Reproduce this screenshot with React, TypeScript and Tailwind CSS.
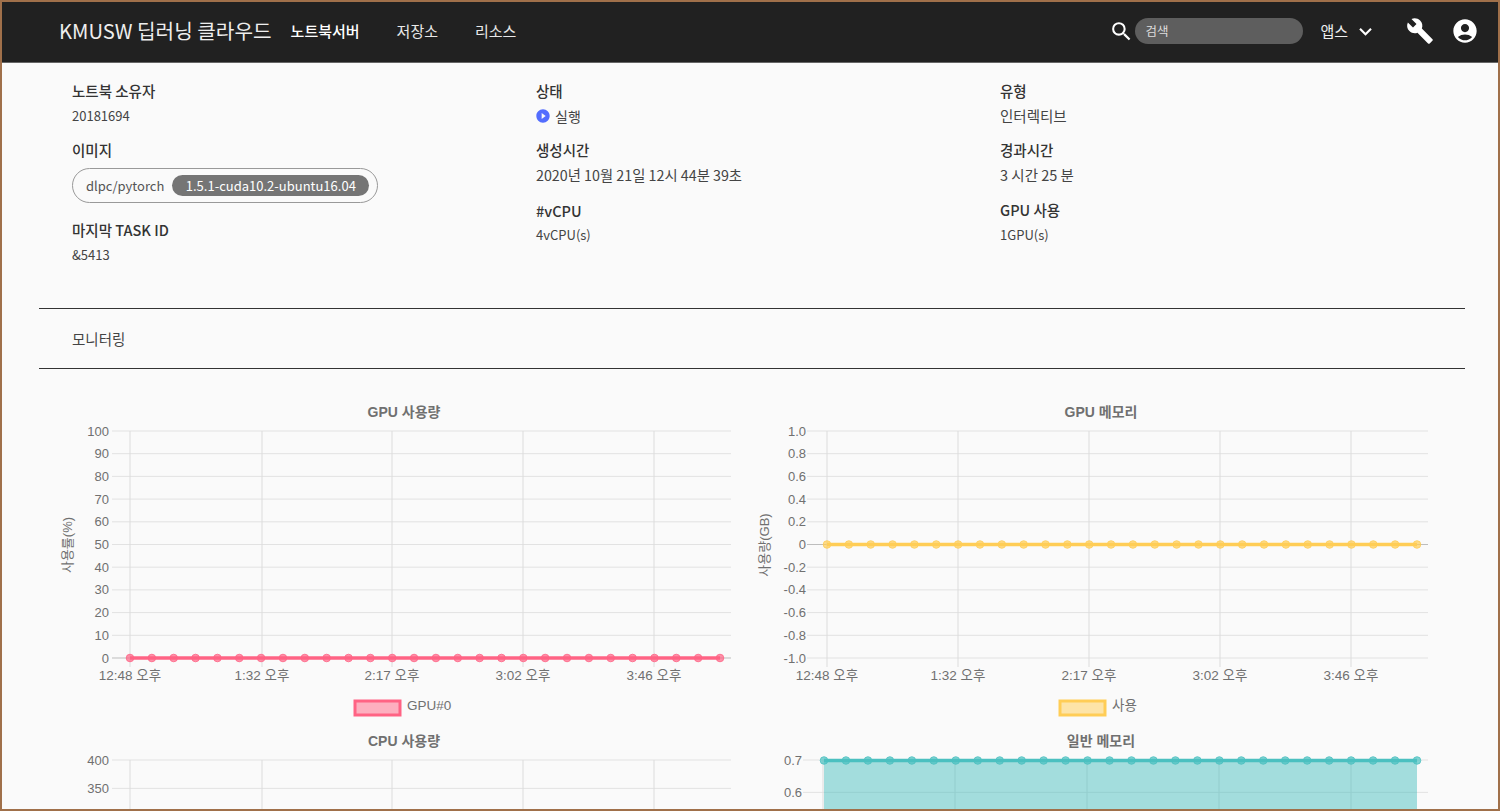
import { MdAccountCircle, MdBuild, MdExpandMore, MdPlayCircleFilled, MdSearch } from "react-icons/md";

const FONT = "font-['Noto_Sans_CJK_KR','Noto_Sans',sans-serif]";
const X_LABELS = ["12:48 오후", "1:32 오후", "2:17 오후", "3:02 오후", "3:46 오후"];

type ChartProps = {
  title: string;
  yLabel?: string;
  ticks: string[];
  step: number;
  gridX: number[];
  tickFrom: number;
  labelEnd: number;
  firstPoint: number;
  color: string;
  valueY?: number;
  zeroIndex?: number;
  fill?: boolean;
  legend?: { text: string; x: number };
  // lower row runs past the bottom of the window
  cut?: boolean;
};

function Chart(props: ChartProps) {
  const { title, yLabel, ticks, step, gridX, tickFrom, labelEnd, firstPoint, color, valueY, zeroIndex, fill, legend, cut } = props;
  const top = 31;
  const bottom = cut ? 329 : top + step * (ticks.length - 1);
  const right = 677;
  const points = Array.from({ length: 28 }, (_, i) => firstPoint + (i * (666 - firstPoint)) / 27);

  return (
    <svg width="697" height="329" className="block font-['Liberation_Sans','Noto_Sans_CJK_KR',sans-serif]">
      <text x="350" y="17" textAnchor="middle" fontSize="14" fontWeight="700" fill="#707070">
        {title}
      </text>
      {yLabel && (
        <text x="17.5" y="145" textAnchor="middle" fontSize="13" fill="#707070" transform="rotate(-90 17.5 145)">
          {yLabel}
        </text>
      )}
      {ticks.map((t, i) => {
        const y = top + i * step;
        return (
          <g key={t}>
            <line x1={tickFrom} x2={right} y1={y} y2={y} stroke={i === zeroIndex ? "#bdbdbd" : "#e2e2e2"} />
            <text x={labelEnd} y={y + 4.5} textAnchor="end" fontSize="13" fill="#707070">
              {t}
            </text>
          </g>
        );
      })}
      {gridX.map((x, i) => (
        <g key={x}>
          <line x1={x} x2={x} y1={top} y2={bottom + 9} stroke="#dcdcdc" />
          {!cut && (
            <text x={x} y={bottom + 22} textAnchor="middle" fontSize="13.5" fill="#707070">
              {X_LABELS[i]}
            </text>
          )}
        </g>
      ))}
      {fill && valueY !== undefined && (
        <rect x={firstPoint} y={valueY} width={666 - firstPoint} height={329 - valueY} fill={color} fillOpacity="0.5" />
      )}
      {valueY !== undefined && <line x1={firstPoint} x2="666" y1={valueY} y2={valueY} stroke={color} strokeWidth="3.5" />}
      {valueY !== undefined &&
        points.map((x) => (
          <circle key={x} cx={x} cy={valueY} r="3.8" fill={color} fillOpacity="0.7" stroke={color} strokeOpacity="0.8" />
        ))}
      {legend && (
        <g>
          <rect x={legend.x} y="301" width="45" height="14" fill={color} fillOpacity="0.5" stroke={color} strokeWidth="3" />
          <text x={legend.x + 52} y="310" fontSize="13.5" fill="#707070">
            {legend.text}
          </text>
        </g>
      )}
    </svg>
  );
}

function Field({
  label,
  children,
  className = "",
  valueClass = "text-[14.5px] mt-[5px]",
}: {
  label: string;
  children: React.ReactNode;
  className?: string;
  valueClass?: string;
}) {
  return (
    <div className={className}>
      <div className="text-[14.5px] leading-[20px] font-medium text-[#333]">{label}</div>
      <div className={`leading-[20px] text-[#444] ${valueClass}`}>{children}</div>
    </div>
  );
}

export default function App() {
  return (
    <div className={`h-[811px] overflow-hidden border-2 border-[#a0704a] bg-[#fafafa] ${FONT}`}>
      <header className="flex h-[61px] items-center border-b border-[#666] bg-[#212121] pb-[2px] pl-[57px] pr-[19px] text-white">
        <span className="text-[20.2px] text-[#eee]">KMUSW 딥러닝 클라우드</span>
        <nav className="ml-[19px] flex text-[15px]">
          <span className="font-medium">노트북서버</span>
          <span className="ml-[37px] text-[#e8e8e8]">저장소</span>
          <span className="ml-[37px] text-[#e8e8e8]">리소스</span>
        </nav>
        <MdSearch className="ml-auto text-[25px]" />
        <div className="ml-[1px] flex h-[26px] w-[168px] items-center rounded-full bg-[#5e5e5e] pl-[10px] text-[12.5px] text-[#ddd]">
          검색
        </div>
        <span className="ml-[17px] text-[15px] text-[#eee]">앱스</span>
        <MdExpandMore className="ml-[5px] text-[25px]" />
        <MdBuild className="ml-[28px] text-[28px]" />
        <MdAccountCircle className="ml-[17px] text-[28px]" />
      </header>

      <section className="grid h-[245px] grid-cols-[464px_464px_1fr] pl-[70px] pt-[18px]">
        <div>
          <Field label="노트북 소유자" valueClass="text-[13px] mt-[5px]">
            20181694
          </Field>
          <div className="mt-[14px] text-[14.5px] leading-[20px] font-medium text-[#333]">이미지</div>
          <div className="mt-[8px] flex h-[35px] w-[306px] items-center rounded-full border border-[#999] pl-[13px] text-[13px] text-[#555]">
            dlpc/pytorch
            <span className="ml-[8px] flex h-[21px] w-[197px] items-center justify-center rounded-full bg-[#757575] text-[13px] text-white">
              1.5.1-cuda10.2-ubuntu16.04
            </span>
          </div>
          <Field label="마지막 TASK ID" className="mt-[17px]" valueClass="text-[13px] mt-[5px]">
            &amp;5413
          </Field>
        </div>
        <div>
          <Field label="상태" valueClass="text-[14px] mt-[5px]">
            <span className="flex items-center gap-[4px]">
              <MdPlayCircleFilled className="-ml-px text-[16px] text-[#536dfe]" />
              실행
            </span>
          </Field>
          <Field label="생성시간" className="mt-[14px]" valueClass="text-[14.3px] mt-[5px]">
            2020년 10월 21일 12시 44분 39초
          </Field>
          <Field label="#vCPU" className="mt-[16px]" valueClass="text-[13px] mt-[4px]">
            4vCPU(s)
          </Field>
        </div>
        <div>
          <Field label="유형">인터렉티브</Field>
          <Field label="경과시간" className="mt-[14px]">
            3 시간 25 분
          </Field>
          <Field label="GPU 사용" className="mt-[15px]" valueClass="text-[13px] mt-[5px]">
            1GPU(s)
          </Field>
        </div>
      </section>

      <div className="ml-[37px] mr-[33px] flex h-[61px] items-center border-y border-[#333] pl-[33px] text-[14.5px] text-[#444]">
        모니터링
      </div>

      <section className="mt-[31px] grid grid-cols-[697px_697px] pl-[52px]">
        <Chart
          title="GPU 사용량"
          yLabel="사용률(%)"
          ticks={["100", "90", "80", "70", "60", "50", "40", "30", "20", "10", "0"]}
          step={22.7}
          gridX={[76, 208, 338, 469, 600]}
          tickFrom={58}
          labelEnd={55}
          firstPoint={76}
          color="rgb(255,99,132)"
          valueY={258}
          zeroIndex={10}
          legend={{ text: "GPU#0", x: 301 }}
        />
        <Chart
          title="GPU 메모리"
          yLabel="사용량(GB)"
          ticks={["1.0", "0.8", "0.6", "0.4", "0.2", "0", "-0.2", "-0.4", "-0.6", "-0.8", "-1.0"]}
          step={22.7}
          gridX={[76, 207, 338, 469, 600]}
          tickFrom={56}
          labelEnd={55}
          firstPoint={76}
          color="rgb(255,205,86)"
          valueY={144.5}
          zeroIndex={5}
          legend={{ text: "사용", x: 309 }}
        />
        <Chart
          title="CPU 사용량"
          ticks={["400", "350"]}
          step={28.4}
          gridX={[76, 208, 338, 469, 600]}
          tickFrom={58}
          labelEnd={55}
          firstPoint={76}
          color="rgb(255,99,132)"
          cut
        />
        <Chart
          title="일반 메모리"
          ticks={["0.7", "0.6"]}
          step={32.4}
          gridX={[72, 204, 336, 468, 600]}
          tickFrom={52}
          labelEnd={51}
          firstPoint={73}
          color="rgb(75,192,192)"
          valueY={31.5}
          fill
          cut
        />
      </section>
    </div>
  );
}
